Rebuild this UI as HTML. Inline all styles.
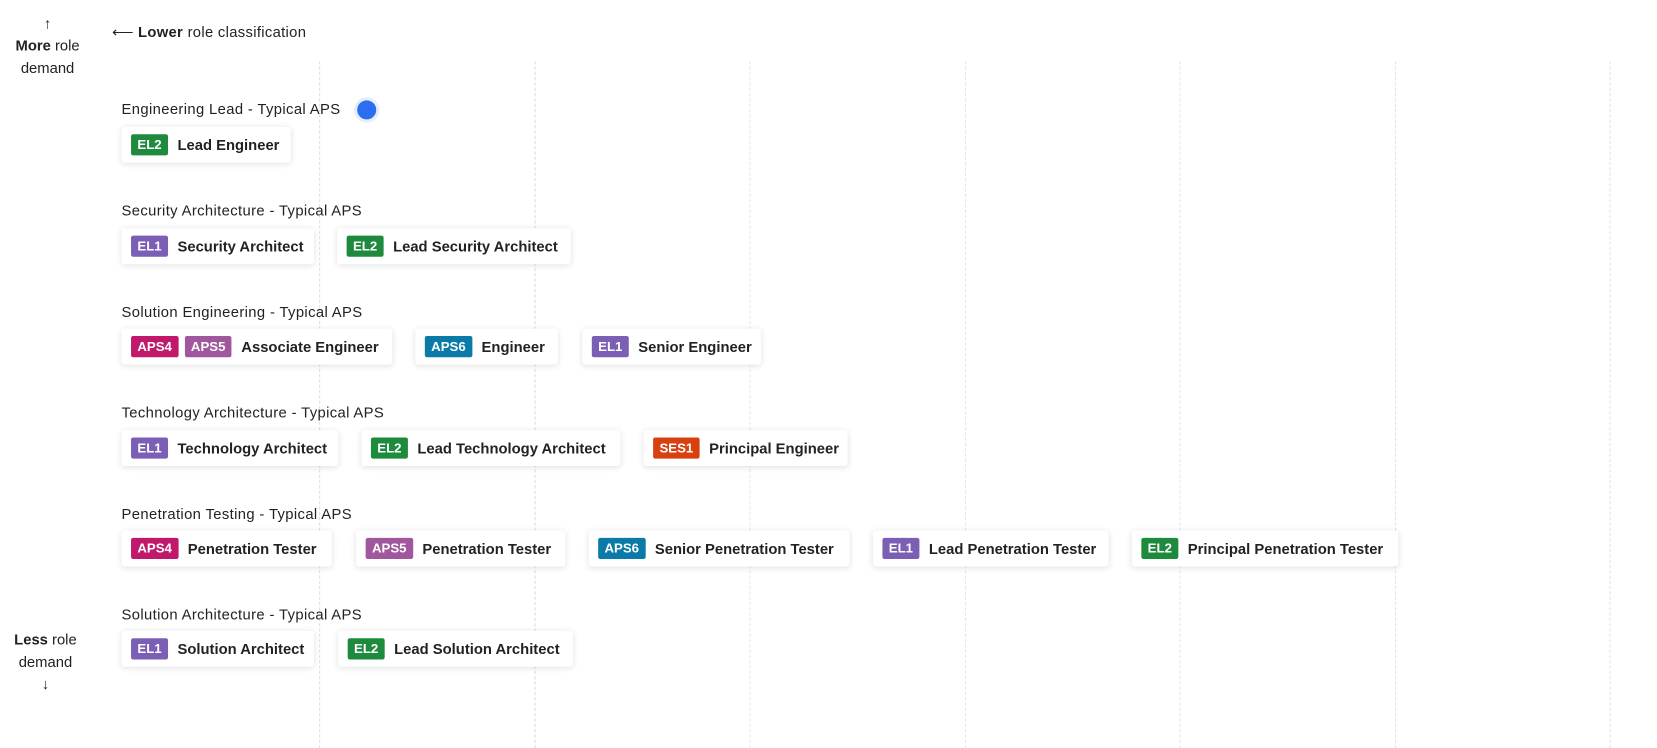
<!DOCTYPE html>
<html><head><style>
body{margin:0;width:1657px;height:706px;background:#fff;font-family:"Liberation Sans",sans-serif;color:#222;overflow:hidden}
#w{position:absolute;left:0;top:0;width:1568px;height:668px;transform:scale(1.0568);transform-origin:0 0}
.v{position:absolute;top:58px;bottom:-40px;border-left:1px dashed #e2e2e2;width:0}
.lab{position:absolute;left:115px;font-size:14px;color:#222;line-height:16px;letter-spacing:0.35px}
.chip{position:absolute;height:34px;background:#fff;border-radius:3px;box-shadow:0 1px 6px rgba(0,0,0,.12);display:flex;align-items:center;padding-left:9px;box-sizing:border-box;font-size:14px;font-weight:bold;color:#222;white-space:nowrap}
.b{display:inline-block;height:20px;line-height:20px;padding:0 6px;color:#fff;font-size:12.5px;font-weight:bold;border-radius:2px;margin-right:9px}
.el2{background:#1e8a3e}.el1{background:#7b5fb5}.a4{background:#c0186a}.a5{background:#a0579d}.a6{background:#0a7ba8}.s1{background:#d9400f}
.side{position:absolute;text-align:center;font-size:14px;line-height:21px;width:90px}
</style></head><body><div id="w">
<div class="v" style="left:302px"></div><div class="v" style="left:506px"></div><div class="v" style="left:709px"></div><div class="v" style="left:913px"></div><div class="v" style="left:1116px"></div><div class="v" style="left:1320px"></div><div class="v" style="left:1523px"></div>
<div class="side" style="left:0;top:12px">↑<br><b>More</b> role<br>demand</div>
<div class="side" style="left:-2px;top:595px"><b>Less</b> role<br>demand<br>↓</div>
<div style="position:absolute;left:106px;top:22px;font-size:14px;letter-spacing:0.3px">⟵ <b>Lower</b> role classification</div>
<div style="position:absolute;left:335px;top:92px;width:18px;height:18px;border-radius:50%;background:#2b6ef0;border:3px solid #e6eefc"></div>

<div class="lab" style="top:95px">Engineering Lead - Typical APS</div>
<div class="chip" style="left:115px;top:120px;width:160px"><span class="b el2">EL2</span>Lead Engineer</div>

<div class="lab" style="top:191px">Security Architecture - Typical APS</div>
<div class="chip" style="left:115px;top:216px;width:182px"><span class="b el1">EL1</span>Security Architect</div>
<div class="chip" style="left:319px;top:216px;width:221px"><span class="b el2">EL2</span>Lead Security Architect</div>

<div class="lab" style="top:287px">Solution Engineering - Typical APS</div>
<div class="chip" style="left:115px;top:311px;width:256px"><span class="b a4" style="margin-right:6px">APS4</span><span class="b a5">APS5</span>Associate Engineer</div>
<div class="chip" style="left:393px;top:311px;width:135px"><span class="b a6">APS6</span>Engineer</div>
<div class="chip" style="left:551px;top:311px;width:169px"><span class="b el1">EL1</span>Senior Engineer</div>

<div class="lab" style="top:382px">Technology Architecture - Typical APS</div>
<div class="chip" style="left:115px;top:407px;width:205px"><span class="b el1">EL1</span>Technology Architect</div>
<div class="chip" style="left:342px;top:407px;width:245px"><span class="b el2">EL2</span>Lead Technology Architect</div>
<div class="chip" style="left:609px;top:407px;width:193px"><span class="b s1">SES1</span>Principal Engineer</div>

<div class="lab" style="top:478px">Penetration Testing - Typical APS</div>
<div class="chip" style="left:115px;top:502px;width:199px"><span class="b a4">APS4</span>Penetration Tester</div>
<div class="chip" style="left:337px;top:502px;width:198px"><span class="b a5">APS5</span>Penetration Tester</div>
<div class="chip" style="left:557px;top:502px;width:247px"><span class="b a6">APS6</span>Senior Penetration Tester</div>
<div class="chip" style="left:826px;top:502px;width:223px"><span class="b el1">EL1</span>Lead Penetration Tester</div>
<div class="chip" style="left:1071px;top:502px;width:252px"><span class="b el2">EL2</span>Principal Penetration Tester</div>

<div class="lab" style="top:573px">Solution Architecture - Typical APS</div>
<div class="chip" style="left:115px;top:597px;width:182px"><span class="b el1">EL1</span>Solution Architect</div>
<div class="chip" style="left:320px;top:597px;width:222px"><span class="b el2">EL2</span>Lead Solution Architect</div>
</div></body></html>
